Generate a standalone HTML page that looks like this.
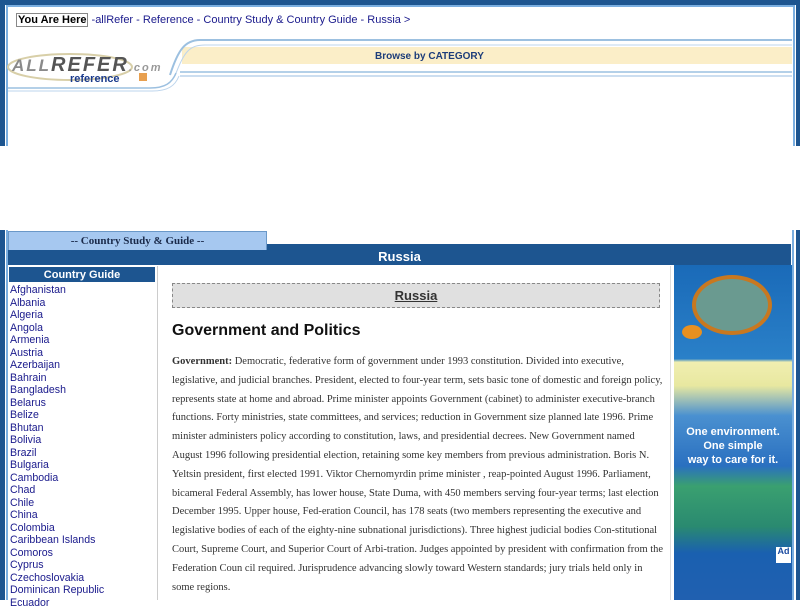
<!DOCTYPE html>
<html><head><meta charset="utf-8"><style>
*{margin:0;padding:0;box-sizing:border-box}
body{width:800px;height:600px;overflow:hidden;background:#fff;position:relative;font-family:"Liberation Sans",Arial,sans-serif}
.a{position:absolute}
.nav{color:#1a1a8c}
.list div{height:12.5px;line-height:12.5px;font-size:10.6px;color:#1a1a8c}
.body{font-family:"Liberation Serif",serif;font-size:10.5px;line-height:18.8px;color:#333}
</style></head><body>
<div class="a" style="left:0;top:0;width:800px;height:5px;background:#1d5590"></div>
<div class="a" style="left:0;top:0;width:5px;height:146px;background:#1d5590"></div>
<div class="a" style="left:6px;top:5px;width:2px;height:141px;background:#7aaee0"></div>
<div class="a" style="left:8px;top:5px;width:786px;height:2px;background:#7aaee0"></div>
<div class="a" style="left:793px;top:5px;width:2px;height:141px;background:#7aaee0"></div>
<div class="a" style="left:796px;top:0;width:4px;height:146px;background:#1d5590"></div>
<div class="a" style="left:16px;top:13px;font-size:11px;line-height:15px;white-space:nowrap"><span style="border:1px solid #888;padding:0 1px;font-weight:bold;color:#000">You Are Here</span> <span class="nav">-allRefer - Reference - Country Study &amp; Country Guide - Russia &gt;</span></div>
<svg class="a" style="left:0;top:35px" width="800" height="60">
<rect x="182" y="12" width="610" height="17" fill="#fbeec8"/>
<path d="M170 40 C178 15 185 5 200 5 L792 5" stroke="#9cc0e0" stroke-width="2" fill="none"/>
<path d="M175 41 C184 16 190 10 205 10 L792 10" stroke="#bcd4ec" stroke-width="1" fill="none"/>
<line x1="180" y1="37" x2="792" y2="37" stroke="#9cc0e0" stroke-width="1.5"/>
<line x1="180" y1="41" x2="792" y2="41" stroke="#bcd4ec" stroke-width="1.5"/>
<path d="M8 53 L150 53 C165 53 172 48 176 38" stroke="#9cc0e0" stroke-width="1.5" fill="none"/>
<path d="M8 56 L152 56 C168 56 175 51 179 41" stroke="#bcd4ec" stroke-width="1" fill="none"/>
<ellipse cx="70" cy="32" rx="62" ry="13" fill="none" stroke="#d8cfa8" stroke-width="2"/>
<text x="12" y="36" font-family="Liberation Sans" font-weight="bold" font-style="italic" font-size="17" fill="#8a8a8a" letter-spacing="2">ALL<tspan fill="#555" font-size="20">REFER</tspan><tspan font-size="11" fill="#999">.com</tspan></text>
<text x="70" y="47" font-family="Liberation Sans" font-weight="bold" font-size="11" fill="#1a3a8c">reference</text>
<rect x="139" y="38" width="8" height="8" fill="#e8a050"/>
<text x="375" y="24" font-family="Liberation Sans" font-weight="bold" font-size="10" fill="#1d3d7a">Browse by CATEGORY</text>
</svg>
<div class="a" style="left:0;top:230px;width:5px;height:370px;background:#1d5590"></div>
<div class="a" style="left:6px;top:230px;width:2px;height:370px;background:#7aaee0"></div>
<div class="a" style="left:796px;top:230px;width:4px;height:370px;background:#1d5590"></div>
<div class="a" style="left:792px;top:230px;width:2px;height:370px;background:#7aaee0"></div>
<div class="a" style="left:8px;top:244px;width:783px;height:21px;background:#1d5590"></div>
<div class="a" style="left:8px;top:231px;width:259px;height:19px;background:#a6c8f0;border:1px solid #6a98c8;border-bottom:none;text-align:center;font:bold 11px/18px 'Liberation Serif',serif;color:#1a2a4a">-- Country Study &amp; Guide --</div>
<div class="a" style="left:8px;top:250px;width:783px;text-align:center;font:bold 13px/14px 'Liberation Sans',sans-serif;color:#fff">Russia</div>
<div class="a" style="left:9px;top:267px;width:146px;height:15px;background:#1d5590;color:#fff;font:bold 11px/16px 'Liberation Sans',sans-serif;text-align:center">Country Guide</div>
<div class="a" style="left:157px;top:266px;width:1px;height:334px;background:#ccc"></div>
<div class="a list" style="left:10px;top:284px">
<div>Afghanistan</div><div>Albania</div><div>Algeria</div><div>Angola</div><div>Armenia</div><div>Austria</div><div>Azerbaijan</div><div>Bahrain</div><div>Bangladesh</div><div>Belarus</div><div>Belize</div><div>Bhutan</div><div>Bolivia</div><div>Brazil</div><div>Bulgaria</div><div>Cambodia</div><div>Chad</div><div>Chile</div><div>China</div><div>Colombia</div><div>Caribbean Islands</div><div>Comoros</div><div>Cyprus</div><div>Czechoslovakia</div><div>Dominican Republic</div><div>Ecuador</div>
</div>
<div class="a" style="left:172px;top:283px;width:488px;height:25px;background:#e0e0e0;border:1px dashed #888;text-align:center;font:bold 13px/23px 'Liberation Sans',sans-serif;color:#333;text-decoration:underline">Russia</div>
<div class="a" style="left:172px;top:321px;font:bold 16px/20px 'Liberation Sans',sans-serif;color:#111">Government and Politics</div>
<div class="a body" style="left:172px;top:353px;width:492px"><b>Government:</b> Democratic, federative form of government under 1993 constitution. Divided into executive, legislative, and judicial branches. President, elected to four-year term, sets basic tone of domestic and foreign policy, represents state at home and abroad. Prime minister appoints Government (cabinet) to administer executive-branch functions. Forty ministries, state committees, and services; reduction in Government size planned late 1996. Prime minister administers policy according to constitution, laws, and presidential decrees. New Government named August 1996 following presidential election, retaining some key members from previous administration. Boris N. Yeltsin president, first elected 1991. Viktor Chernomyrdin prime minister , reap-pointed August 1996. Parliament, bicameral Federal Assembly, has lower house, State Duma, with 450 members serving four-year terms; last election December 1995. Upper house, Fed-eration Council, has 178 seats (two members representing the executive and legislative bodies of each of the eighty-nine subnational jurisdictions). Three highest judicial bodies Con-stitutional Court, Supreme Court, and Superior Court of Arbi-tration. Judges appointed by president with confirmation from the Federation Coun cil required. Jurisprudence advancing slowly toward Western standards; jury trials held only in some regions.</div>
<div class="a" style="left:670px;top:266px;width:1px;height:334px;background:#ddd"></div>
<div class="a" style="left:674px;top:265px;width:118px;height:335px;overflow:hidden;background:linear-gradient(#1a6ab8 0%,#2a80c8 28%,#f0eeb0 29%,#e8e8a0 36%,#4a90d0 45%,#2a70c0 60%,#3aa070 66%,#2a8a70 78%,#1a60b0 86%,#2060b0 100%)">
<div class="a" style="left:18px;top:10px;width:80px;height:60px;border-radius:50%;background:#6a9a90;border:4px solid #c87820"></div>
<div class="a" style="left:8px;top:60px;width:20px;height:14px;border-radius:50%;background:#e89020"></div>
<div class="a" style="left:0;top:160px;width:118px;text-align:center;color:#fff;font:bold 11px/14px 'Liberation Sans',sans-serif">One environment.<br>One simple<br>way to care for it.</div>
<div class="a" style="left:102px;top:282px;width:15px;height:16px;background:#fff;color:#1a4aa0;font:bold 9px/9px 'Liberation Sans',sans-serif;text-align:center">Ad</div>
</div>
</body></html>
